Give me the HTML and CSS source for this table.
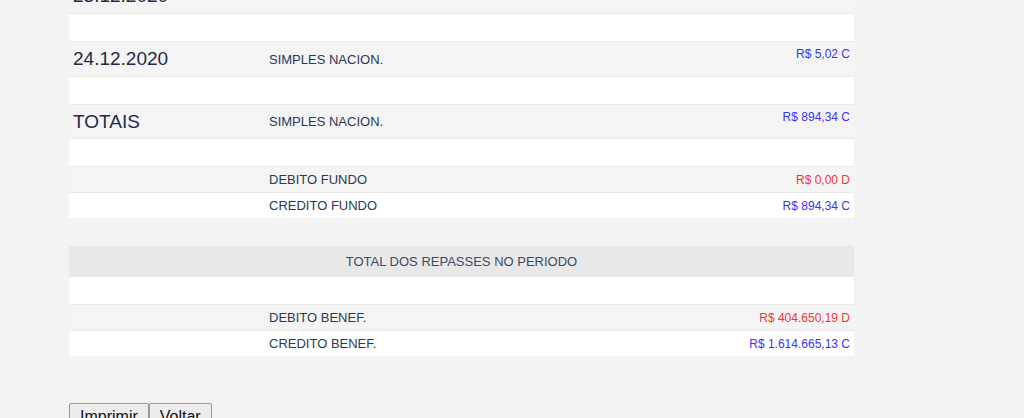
FILE: index.html
```html
<!DOCTYPE html>
<html lang="pt">
<head>
<meta charset="utf-8">
<title>Repasses</title>
<link rel="stylesheet" href="styles.css">
</head>
<body>
<div class="report">
  <div class="row gray tall">
    <div class="c-date big">23.12.2020</div>
    <div class="c-label"></div>
    <div class="c-amt top credit"></div>
  </div>
  <div class="row white empty"></div>
  <div class="row gray tall">
    <div class="c-date big">24.12.2020</div>
    <div class="c-label">SIMPLES NACION.</div>
    <div class="c-amt top credit">R$ 5,02 C</div>
  </div>
  <div class="row white empty"></div>
  <div class="row gray tall t2">
    <div class="c-date big">TOTAIS</div>
    <div class="c-label">SIMPLES NACION.</div>
    <div class="c-amt top credit">R$ 894,34 C</div>
  </div>
  <div class="row white empty"></div>
  <div class="row gray small">
    <div class="c-date"></div>
    <div class="c-label">DEBITO FUNDO</div>
    <div class="c-amt debit">R$ 0,00 D</div>
  </div>
  <div class="row white small">
    <div class="c-date"></div>
    <div class="c-label">CREDITO FUNDO</div>
    <div class="c-amt credit">R$ 894,34 C</div>
  </div>
  <div class="spacer"></div>
  <div class="row head">TOTAL DOS REPASSES NO PERIODO</div>
  <div class="row white empty"></div>
  <div class="row gray small">
    <div class="c-date"></div>
    <div class="c-label">DEBITO BENEF.</div>
    <div class="c-amt debit">R$ 404.650,19 D</div>
  </div>
  <div class="row white small">
    <div class="c-date"></div>
    <div class="c-label">CREDITO BENEF.</div>
    <div class="c-amt credit">R$ 1.614.665,13 C</div>
  </div>
</div>
<div class="actions">
  <button class="btn" type="button">Imprimir</button>
  <button class="btn" type="button">Voltar</button>
</div>
</body>
</html>
```

FILE: styles.css
```css
html, body {
  margin: 0;
  padding: 0;
  background: #f3f3f3;
  font-family: "Liberation Sans", Arial, sans-serif;
}
.report {
  width: 785px;
  margin: -22px 0 0 69px;
  display: flex;
  flex-direction: column;
}
.row {
  display: flex;
  box-sizing: border-box;
  border-top: 1px solid #e9e9e9;
  color: #2b3856;
}
.white { background: #ffffff; }
.gray { background: #f4f4f4; }
.empty { height: 28px; }
.tall { height: 35px; align-items: center; }
.t2 { height: 34px; }
.small { height: 26px; align-items: center; }
.c-date {
  width: 196px;
  padding-left: 4px;
  color: #1c2a4b;
}
.big { font-size: 19px; }
.c-label {
  flex: 1;
  font-size: 13px;
}
.c-amt {
  padding-right: 4px;
  font-size: 12px;
  text-align: right;
}
.top {
  align-self: flex-start;
  padding-top: 5px;
}
.credit { color: #3535f5; }
.debit { color: #f53535; }
.spacer { height: 28px; }
.head {
  height: 30px;
  background: #e8e8e8;
  border-top: none;
  justify-content: center;
  align-items: center;
  font-size: 13px;
  color: #3a4a68;
}
.actions {
  display: flex;
  margin: 47px 0 0 69px;
}
.btn {
  font-family: "Liberation Sans", Arial, sans-serif;
  font-size: 16px;
  padding: 4px 10px;
  border: 1px solid #9a9a9a;
  border-radius: 2px;
  background: #ececec;
  color: #111;
  margin: 0;
}
```
